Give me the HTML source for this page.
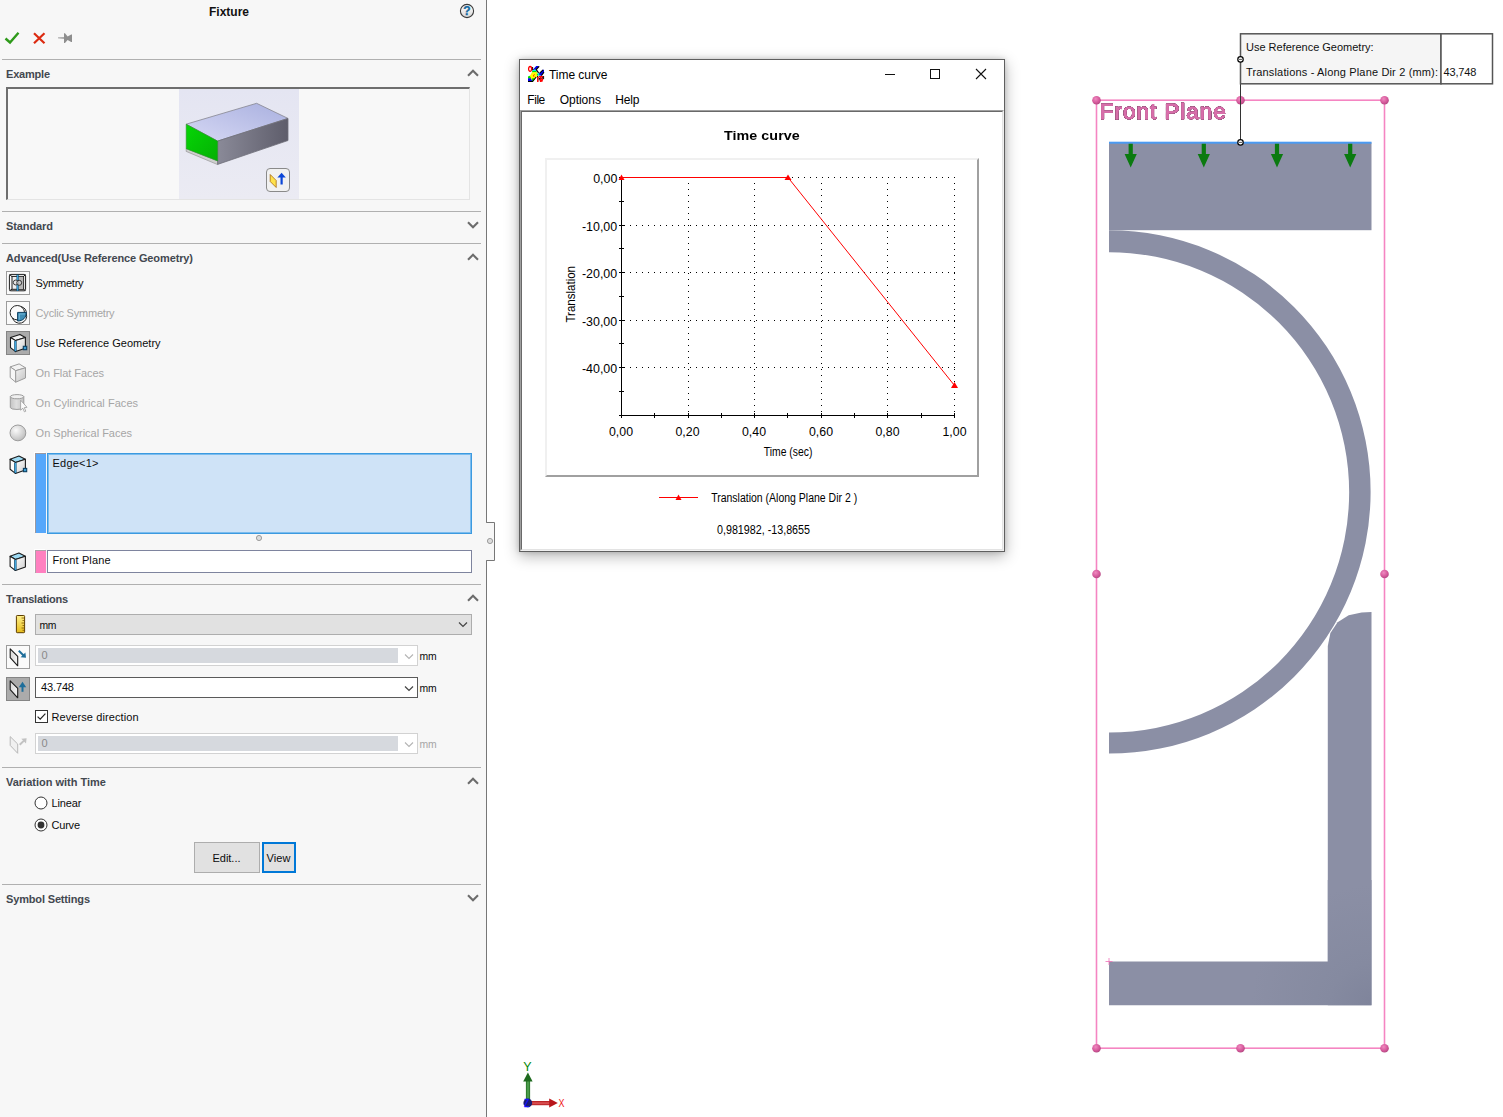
<!DOCTYPE html>
<html><head><meta charset="utf-8"><title>Fixture</title>
<style>
html,body{margin:0;padding:0;}
body{width:1503px;height:1117px;overflow:hidden;background:#fff;position:relative;font-family:"Liberation Sans",sans-serif;font-size:11px;color:#0c0c0c;}
div{box-sizing:border-box;}
#panel{position:absolute;left:0;top:0;width:486px;height:1117px;background:#f7f7f7;}
#pborder{position:absolute;left:486px;top:0;width:1px;height:1117px;background:#777;}
.t{position:absolute;white-space:nowrap;line-height:14px;height:14px;}
.hd{font-weight:bold;color:#434850;}
.dis{color:#a6a6a6;}
.hr{position:absolute;left:2px;width:479px;height:1px;background:#b0b0b0;}
.ibox{position:absolute;left:6px;width:24px;height:24px;border:1px solid #9c9c9c;background:#fafafa;}
.ibox.on{background:#ababab;border-color:#858585;}
.b{position:absolute;}
svg{position:absolute;overflow:visible;}
.chev{fill:none;stroke:#6c6c6c;stroke-width:2.1;}
.inp{position:absolute;left:35px;width:383px;border:1px solid #d2d2d2;background:#fff;}
.inp i{position:absolute;left:2px;top:2px;width:360px;bottom:2px;background:#d6d9de;display:block;}
</style></head><body>
<div id="panel">
<div class="t" style="letter-spacing:-0.003px;left:209px;top:5px;font-weight:bold;font-size:12px;color:#111;">Fixture</div>
<!-- help icon -->
<svg style="left:459px;top:3px" width="16" height="16" viewBox="0 0 16 16"><defs><linearGradient id="hg" x1="0" y1="0" x2="0" y2="1"><stop offset="0" stop-color="#ffffff"/><stop offset="1" stop-color="#d8d8d8"/></linearGradient></defs><circle cx="8" cy="8" r="6.6" fill="url(#hg)" stroke="#3a3a3a" stroke-width="1.1"/><text x="8" y="12.3" text-anchor="middle" font-family="Liberation Sans, sans-serif" font-weight="bold" font-size="12" fill="#1368a0" stroke="#1368a0" stroke-width="0.3">?</text></svg>
<!-- ok / cancel / pin -->
<svg style="left:4px;top:30px" width="16" height="16" viewBox="0 0 16 16"><path d="M1.5 8.5 L6 12.5 L14.5 2.8" fill="none" stroke="#2e9a1a" stroke-width="2.4"/></svg>
<svg style="left:31px;top:30px" width="16" height="16" viewBox="0 0 16 16"><path d="M3 3.2 L13.5 13.3 M13.5 3.2 L3 13.3" fill="none" stroke="#dc2a10" stroke-width="2.2"/></svg>
<svg style="left:57px;top:30px" width="18" height="16" viewBox="57 30 18 16"><polygon points="58,37.4 64.3,37.3 64.3,38.7 58,38.2" fill="#8e8e8e"/><polygon points="64,33.2 65,33.2 67.6,36.4 71.2,34.4 72,34.4 72,42 71.2,42 67.6,39.9 65,42.9 64,42.9" fill="#8e8e8e"/></svg>
<div class="hr" style="top:59px"></div>

<div class="t hd" style="letter-spacing:-0.208px;left:6px;top:67px;">Example</div>
<svg style="left:467px;top:69px" width="12" height="8" viewBox="0 0 12 8"><path class="chev" d="M1 6.8 L6 1.8 L11 6.8"/></svg>
<!-- example box -->
<div class="b" style="left:6px;top:87px;width:464px;height:113px;border-top:2px solid #6e6e6e;border-left:2px solid #6e6e6e;border-right:1px solid #e4e4e4;border-bottom:1px solid #e4e4e4;background:#f8f8f8;"></div>
<div class="b" style="left:179px;top:89px;width:120px;height:110px;background:linear-gradient(180deg,#e4e5f2,#ebebf3);"></div>
<svg style="left:179px;top:89px" width="120" height="110" viewBox="179 89 120 110">
<defs>
<linearGradient id="tp" x1="0" y1="1" x2="1" y2="0"><stop offset="0" stop-color="#d6d8f4"/><stop offset="1" stop-color="#a9b0df"/></linearGradient>
<linearGradient id="sd" x1="0" y1="0" x2="1" y2="0"><stop offset="0" stop-color="#8a8a98"/><stop offset="1" stop-color="#5e5d6b"/></linearGradient>
<linearGradient id="gr" x1="0" y1="0" x2="1" y2="1"><stop offset="0" stop-color="#06d606"/><stop offset="1" stop-color="#04b004"/></linearGradient>
</defs>
<polygon points="186.2,148.5 217.6,160.9 217.6,164.6 186.2,151.4" fill="#cfcfcf" stroke="#8a8a8a" stroke-width="0.6"/>
<polygon points="186.2,124.2 256.6,103.3 288,118.4 217.6,141.1" fill="url(#tp)" stroke="#85858f" stroke-width="0.8"/>
<polygon points="217.6,141.1 288,118.4 288,140.5 217.6,164.4" fill="url(#sd)" stroke="#70707a" stroke-width="0.8"/>
<polygon points="186.2,124.2 217.6,141.1 217.6,160.9 186.2,148.7" fill="url(#gr)" stroke="#2f8f2f" stroke-width="0.6"/>
<rect x="266.5" y="168.5" width="23" height="23" rx="3.5" fill="#f1f1f1" stroke="#8a8a8a" stroke-width="1"/>
<polygon points="270.2,174.5 276.2,180.5 276.2,187.5 270.2,181.5" fill="#ffe24a" stroke="#a86a10" stroke-width="0.8"/>
<path d="M281.6 184.5 V176" stroke="#0b46d8" stroke-width="2.2" fill="none"/>
<polygon points="277.4,177.6 281.6,172.8 285.8,177.6" fill="#0b46d8"/>
</svg>
<div class="hr" style="top:211px"></div>
<div class="t hd" style="letter-spacing:-0.098px;left:6px;top:219px;">Standard</div>
<svg style="left:467px;top:221px" width="12" height="8" viewBox="0 0 12 8"><path class="chev" d="M1 1.2 L6 6.2 L11 1.2"/></svg>
<div class="hr" style="top:243px"></div>
<div class="t hd" style="letter-spacing:-0.121px;left:6px;top:251px;">Advanced(Use Reference Geometry)</div>
<svg style="left:467px;top:253px" width="12" height="8" viewBox="0 0 12 8"><path class="chev" d="M1 6.8 L6 1.8 L11 6.8"/></svg>

<div class="ibox" style="top:271px"></div>
<div class="t" style="letter-spacing:-0.214px;left:35.6px;top:276px;">Symmetry</div>
<div class="ibox" style="top:301px"></div>
<div class="t dis" style="letter-spacing:-0.206px;left:35.6px;top:306px;">Cyclic Symmetry</div>
<div class="ibox on" style="top:331px"></div>
<div class="t" style="letter-spacing:0.013px;left:35.6px;top:336px;">Use Reference Geometry</div>
<div class="t dis" style="letter-spacing:-0.048px;left:35.6px;top:366px;">On Flat Faces</div>
<div class="t dis" style="letter-spacing:0.053px;left:35.6px;top:396px;">On Cylindrical Faces</div>
<div class="t dis" style="letter-spacing:-0.006px;left:35.6px;top:426px;">On Spherical Faces</div>


<!-- selection boxes -->
<div class="b" style="left:35px;top:453px;width:11px;height:80px;background:#55a7fb;border-top:1px solid #9a98a0;border-left:1px solid #9a98a0;box-shadow:-1px -1px 0 #fff;"></div>
<div class="b" style="left:47px;top:453px;width:425px;height:81px;background:#cfe3f7;border:1px solid #3c9ae0;box-shadow:inset 0 0 0 1px #7bbcee;"></div>
<div class="t" style="letter-spacing:0.224px;left:52.5px;top:456px;">Edge&lt;1&gt;</div>
<svg style="left:255px;top:534px" width="8" height="8" viewBox="0 0 8 8"><circle cx="4" cy="4" r="2.6" fill="#dcdcdc" stroke="#8a8a8a" stroke-width="0.8"/></svg>
<div class="b" style="left:35px;top:550px;width:11px;height:23px;background:#ff80c0;border-top:1px solid #b0a0a8;border-left:1px solid #b0a0a8;box-shadow:-1px -1px 0 #fff;"></div>
<div class="b" style="left:47px;top:550px;width:425px;height:23px;background:#fff;border:1px solid #7e849e;"></div>
<div class="t" style="letter-spacing:0.113px;left:52.5px;top:553px;">Front Plane</div>
<div class="hr" style="top:584px"></div>

<div class="t hd" style="letter-spacing:-0.254px;left:6px;top:592px;">Translations</div>
<svg style="left:467px;top:594px" width="12" height="8" viewBox="0 0 12 8"><path class="chev" d="M1 6.8 L6 1.8 L11 6.8"/></svg>
<div class="b" style="left:35px;top:614px;width:437px;height:21px;background:#e1e1e1;border:1px solid #adadad;"></div>
<div class="t" style="letter-spacing:-0.312px;left:39.4px;top:618.5px;font-size:10.4px;">mm</div>
<svg style="left:458px;top:621px" width="10" height="7" viewBox="0 0 10 7"><path d="M1 1.5 L5 5.5 L9 1.5" fill="none" stroke="#444" stroke-width="1.2"/></svg>

<div class="ibox" style="top:645px"></div>
<div class="inp" style="top:645px;height:21px;"><i></i></div>
<div class="t" style="left:41.5px;top:648px;color:#8a8a8a;">0</div>
<svg style="left:404px;top:653px" width="10" height="7" viewBox="0 0 10 7"><path d="M1 1.5 L5 5.5 L9 1.5" fill="none" stroke="#b4b4b4" stroke-width="1.1"/></svg>
<div class="t" style="letter-spacing:-0.312px;left:419.6px;top:650.2px;font-size:10.4px;">mm</div>

<div class="ibox on" style="top:677px"></div>
<div class="b" style="left:35px;top:677px;width:383px;height:21px;background:#fff;border:1px solid #5a5a5a;"></div>
<div class="t" style="letter-spacing:-0.131px;left:41px;top:679.5px;">43.748</div>
<svg style="left:404px;top:685px" width="10" height="7" viewBox="0 0 10 7"><path d="M1 1.5 L5 5.5 L9 1.5" fill="none" stroke="#444" stroke-width="1.2"/></svg>
<div class="t" style="letter-spacing:-0.312px;left:419.6px;top:682.2px;font-size:10.4px;">mm</div>

<div class="b" style="left:35px;top:710px;width:13px;height:13px;background:#fff;border:1px solid #333;"></div>
<svg style="left:35px;top:710px" width="13" height="13" viewBox="0 0 13 13"><path d="M2.6 6.6 L5.2 9.2 L10.4 3.6" fill="none" stroke="#222" stroke-width="1.2"/></svg>
<div class="t" style="letter-spacing:0.088px;left:51.5px;top:709.5px;">Reverse direction</div>

<div class="inp" style="top:733px;height:21px;"><i></i></div>
<div class="t" style="left:41.5px;top:736px;color:#8a8a8a;">0</div>
<svg style="left:404px;top:741px" width="10" height="7" viewBox="0 0 10 7"><path d="M1 1.5 L5 5.5 L9 1.5" fill="none" stroke="#b4b4b4" stroke-width="1.1"/></svg>
<div class="t dis" style="letter-spacing:-0.312px;left:419.6px;top:738.2px;font-size:10.4px;">mm</div>
<div class="hr" style="top:767px"></div>

<div class="t hd" style="letter-spacing:-0.003px;left:6px;top:775px;">Variation with Time</div>
<svg style="left:467px;top:777.3px" width="12" height="8" viewBox="0 0 12 8"><path class="chev" d="M1 6.8 L6 1.8 L11 6.8"/></svg>
<svg style="left:34.3px;top:795.8px" width="14" height="14" viewBox="0 0 14 14"><circle cx="7" cy="7" r="6" fill="#fff" stroke="#333" stroke-width="1"/></svg>
<div class="t" style="letter-spacing:-0.116px;left:51.5px;top:796px;">Linear</div>
<svg style="left:34.3px;top:817.7px" width="14" height="14" viewBox="0 0 14 14"><circle cx="7" cy="7" r="6" fill="#fff" stroke="#333" stroke-width="1"/><circle cx="7" cy="7" r="3.4" fill="#333"/></svg>
<div class="t" style="letter-spacing:-0.211px;left:51.5px;top:818px;">Curve</div>
<div class="b" style="left:194px;top:842px;width:66px;height:31px;background:#e1e1e1;border:1px solid #adadad;"></div>
<div class="t" style="letter-spacing:-0.021px;left:212.5px;top:851px;">Edit...</div>
<div class="b" style="left:262px;top:842px;width:34px;height:31px;background:#e1e1e1;border:2px solid #0078d7;"></div>
<div class="t" style="letter-spacing:0.115px;left:266.5px;top:851px;">View</div>
<div class="hr" style="top:884px"></div>
<div class="t hd" style="letter-spacing:-0.156px;left:6px;top:892px;">Symbol Settings</div>
<svg style="left:467px;top:894px" width="12" height="8" viewBox="0 0 12 8"><path class="chev" d="M1 1.2 L6 6.2 L11 1.2"/></svg>
<!-- ICONS-LIST -->
<svg style="left:0;top:0" width="40" height="770" viewBox="0 0 40 770">
<defs>
<linearGradient id="cw" x1="0" y1="0" x2="1" y2="1"><stop offset="0" stop-color="#ffffff"/><stop offset="1" stop-color="#cfcfcf"/></linearGradient>
<linearGradient id="cg" x1="0" y1="0" x2="1" y2="1"><stop offset="0" stop-color="#f2f2f2"/><stop offset="1" stop-color="#c2c2c2"/></linearGradient>
<linearGradient id="pl" x1="0" y1="0" x2="1" y2="0"><stop offset="0" stop-color="#d8d8d8"/><stop offset="1" stop-color="#f6f6f6"/></linearGradient>
<radialGradient id="sp" cx="0.38" cy="0.34" r="0.7"><stop offset="0" stop-color="#fafafa"/><stop offset="0.6" stop-color="#d6d6d6"/><stop offset="1" stop-color="#bcbcbc"/></radialGradient>
<linearGradient id="cy" x1="0" y1="0" x2="1" y2="0"><stop offset="0" stop-color="#c4c4c4"/><stop offset="0.45" stop-color="#dedede"/><stop offset="1" stop-color="#c2c2c2"/></linearGradient>
<linearGradient id="ru" x1="0" y1="0" x2="0" y2="1"><stop offset="0" stop-color="#fff08a"/><stop offset="1" stop-color="#e6bc1c"/></linearGradient>
</defs>
<!-- symmetry -->
<g stroke="#1c1c1c" stroke-width="1" fill="none">
<rect x="9.4" y="274.4" width="16.2" height="16.4" rx="1.4"/><path d="M9.6 274.6 L12 276.6 M25.4 274.6 L23.6 276.4 M9.6 290.6 L12 289.2 M25.4 290.6 L23.6 289.2"/>
<rect x="12" y="276.4" width="11.6" height="12.9" fill="#f0f0f0"/><rect x="18.2" y="276.9" width="4.9" height="11.9" fill="#b6b6b6" stroke="none"/>
</g>
<path d="M17.6 274.6 V291" stroke="#0d4f78" stroke-width="2.2"/><path d="M17.6 275 V290.6" stroke="#3fa9e0" stroke-width="1"/>
<circle cx="15.8" cy="282.5" r="2.5" fill="#e6e6e6" stroke="#2a2a2a" stroke-width="0.9"/><circle cx="19.2" cy="282.8" r="2.5" fill="#d2d2d2" fill-opacity="0.7" stroke="#2a2a2a" stroke-width="0.9"/>
<!-- cyclic -->
<circle cx="17.3" cy="312.7" r="7.2" fill="#fbfbfb" stroke="#222" stroke-width="1"/>
<path d="M12.5 318 A7.2 7.2 0 0 0 26.4 314 A7.2 7.2 0 0 0 21 306.6" fill="none" stroke="#222" stroke-width="1"/>
<path d="M17.6 312.4 H26.3 C26.3 317.6 23 321 17.6 321 Z" fill="#3f8db5" stroke="#0c3f60" stroke-width="1"/><path d="M19.3 314 H25 M19.3 314 V319.5" stroke="#7fc0de" stroke-width="0.8" fill="none"/>
<!-- use ref geom (pressed) -->
<g stroke="#1c1c1c" stroke-width="1.1" stroke-linejoin="round">
<polygon points="10.5,337.5 19.9,334.4 25.4,337.4 15.6,340.6" fill="#f4f4f4"/>
<polygon points="10.5,337.5 15.6,340.6 15.6,351.6 10.5,347.6" fill="#fdfdfd"/>
<polygon points="15.6,340.6 25.4,337.4 25.4,348.2 15.6,351.6" fill="url(#cw)"/>
</g>
<path d="M15.4 340.8 V351.4" stroke="#0d4f78" stroke-width="2.3"/><path d="M15.4 341.2 V351" stroke="#49b2ea" stroke-width="1"/>
<rect x="23.3" y="346.3" width="3.4" height="3.4" fill="#3fa0d6" stroke="#0c3f60" stroke-width="1.1"/>
<!-- on flat faces (disabled) -->
<g stroke="#9c9c9c" stroke-width="1" stroke-linejoin="round">
<polygon points="10.2,366.9 19.1,363.9 25.5,367.8 15.7,370.7" fill="#f3f3f3"/>
<polygon points="10.2,366.9 15.7,370.7 15.7,382.2 10.2,377.6" fill="#f6f6f6"/>
<polygon points="15.7,370.7 25.5,367.8 25.5,378 15.7,382.2" fill="url(#cg)"/>
</g>
<!-- cylinder -->
<path d="M10.3 396.7 V407.6 A6.8 2.1 0 0 0 23.8 407.6 V396.7 Z" fill="url(#cy)" stroke="#9c9c9c" stroke-width="1"/>
<ellipse cx="17.05" cy="396.7" rx="6.75" ry="2.1" fill="#f0f0f0" stroke="#9c9c9c" stroke-width="1"/>
<path d="M20.6 400.2 V410.2 L22.8 408.2 L24.4 411.8 L25.8 411.2 L24.3 407.6 L27 407.3 Z" fill="#fbfbfb" stroke="#a4a4a4" stroke-width="0.9" stroke-linejoin="round"/>
<!-- sphere -->
<circle cx="17.9" cy="432.9" r="7.9" fill="url(#sp)" stroke="#9c9c9c" stroke-width="1"/>
<!-- selection icons -->
<g stroke="#1c1c1c" stroke-width="1.1" stroke-linejoin="round">
<polygon points="10.1,459.2 18.9,456 25.4,459.2 15.4,462.4" fill="#9ddaf3"/>
<polygon points="10.1,459.2 15.4,462.4 15.4,473.4 10.1,469.3" fill="#fdfdfd"/>
<polygon points="15.4,462.4 25.4,459.2 25.4,469.9 15.4,473.4" fill="url(#cw)"/>
<path d="M15.4 462.6 V473.2" stroke="#0d4f78" stroke-width="2.3"/><path d="M15.4 463 V472.8" stroke="#49b2ea" stroke-width="1"/>
</g>
<rect x="23.4" y="468.4" width="3.3" height="3.3" fill="#3fa0d6" stroke="#0c3f60" stroke-width="1.1"/>
<g stroke="#1c1c1c" stroke-width="1.1" stroke-linejoin="round">
<polygon points="10.1,556.3 18.9,553.1 25.4,556.3 15.4,559.5" fill="#9ddaf3"/>
<polygon points="10.1,556.3 15.4,559.5 15.4,570.5 10.1,566.4" fill="#fdfdfd"/>
<polygon points="15.4,559.5 25.4,556.3 25.4,567.0 15.4,570.5" fill="url(#cw)"/>
<path d="M15.4 559.7 V570.3" stroke="#0d4f78" stroke-width="2.3"/><path d="M15.4 560.1 V569.9" stroke="#49b2ea" stroke-width="1"/>
</g>
<!-- ruler -->
<rect x="16.4" y="615.5" width="8.2" height="17.2" rx="0.8" fill="url(#ru)" stroke="#5e3e00" stroke-width="1"/>
<path d="M21.5 618 H24.5 M22.5 620.5 H24.5 M21.5 623 H24.5 M22.5 625.5 H24.5 M21.5 628 H24.5 M22.5 630.3 H24.5" stroke="#7a5200" stroke-width="0.8"/>
<!-- dir1 -->
<polygon points="10.2,648.8 17.7,656.3 17.7,665.8 10.2,657.7" fill="url(#pl)" stroke="#1c1c1c" stroke-width="1.1" stroke-linejoin="round"/>
<path d="M18.8 650.8 L23.6 655.5" stroke="#1f6e9a" stroke-width="2"/><polygon points="26,657.8 20.6,657.2 25.4,652.4" fill="#1f6e9a"/>
<!-- dir2 pressed -->
<polygon points="10.2,680.8 17.7,688.3 17.7,697.8 10.2,689.6" fill="url(#pl)" stroke="#1c1c1c" stroke-width="1.1" stroke-linejoin="round"/>
<path d="M22.5 691.8 V685.5" stroke="#1f6e9a" stroke-width="2"/><polygon points="18.8,687.2 22.5,681.8 26.2,687.2" fill="#1f6e9a"/>
<!-- normal disabled -->
<polygon points="10.2,736.6 17.7,744 17.7,753.3 10.2,745.4" fill="#f0f0f0" stroke="#b8b8b8" stroke-width="1" stroke-linejoin="round"/>
<path d="M19.7 744.8 L24 740.6" stroke="#c2c2c2" stroke-width="2"/><polygon points="26.6,738.2 26,743.6 21.3,738.8" fill="#c2c2c2"/>
</svg>
</div>
<div id="pborder"></div>
<!-- tab handle -->
<svg style="left:486px;top:521px" width="10" height="41" viewBox="0 0 10 41"><path d="M0.5 1.5 H8.5 V39.5 H0.5" fill="#f7f7f7" stroke="#777" stroke-width="1"/><rect x="0" y="2" width="1" height="37" fill="#f7f7f7"/><circle cx="4" cy="20" r="2.6" fill="#dcdcdc" stroke="#8a8a8a" stroke-width="0.8"/></svg>
<!-- DIALOG -->
<div class="b" style="left:519px;top:59px;width:486px;height:493px;background:#fff;border:1px solid #5f5f5f;box-shadow:0 4px 14px rgba(0,0,0,.30),0 0 5px rgba(0,0,0,.16);"></div>
<!-- title icon -->
<svg style="left:528px;top:66px" width="16" height="16" viewBox="0 0 16 16">
<polygon points="5,3.6 8.2,0 10.6,0 10.6,0.8 8,3.6 6.5,4" fill="#0000f0"/>
<polygon points="4.3,4.6 5.2,3.4 7.6,3.4 8.6,5 7.8,5.4 4.6,5.4" fill="#00f0f0"/>
<polygon points="3.9,6 4.4,5 8.2,5 9.2,6.4 4,6.6" fill="#00e000"/>
<polygon points="4,6.2 9.2,6.2 10,9.6 8,11.2 5.4,14.6 4,14.4 2.6,12.2 0.4,11.6 2.4,9" fill="#ffff00"/>
<polygon points="0,10.6 1.6,9.8 2.8,11.4 2.8,12.6 0,12.6" fill="#00e000"/>
<polygon points="4,12.4 5.4,12 6.6,13 5,15.2 4,15" fill="#00e000"/>
<polygon points="0,12.2 2.8,12.2 4.2,14.8 4,15.2 0,15.2" fill="#0000f0"/>
<polygon points="8.8,8 10.2,7.4 10.4,9.4 9,9.6" fill="#00e000"/>
<polygon points="9.6,7 12,7 12.4,8.6 11,9.8 10,9.6" fill="#00f0f0"/>
<polygon points="11.4,7.2 14.6,3.8 16,3.8 16,6 13.4,9.8 11.2,9.6" fill="#0000f0"/>
<path d="M11.2 0.4 L8.2 3.6 L10.6 6.9" stroke="#000" stroke-width="1.2" fill="none"/>
<path d="M4.6 1 V4.2 L5.4 3.4" stroke="#000" stroke-width="1" fill="none"/>
<path d="M15.2 3.9 L11.6 7.1 M16 6.2 L13.4 9.6" stroke="#000" stroke-width="1.1" fill="none"/>
<path d="M0 15.5 H4.6 L8.2 11" stroke="#000" stroke-width="1.2" fill="none"/>
<ellipse cx="2.1" cy="2.9" rx="1.5" ry="2.4" fill="#fff" stroke="#f00" stroke-width="1.3"/>
<path d="M6.4 8.4 L5.6 9.6 L5.8 10.6" stroke="#f00" stroke-width="1" fill="none"/>
<path d="M9.8 10.4 V16 M12.6 11.4 V16 M11 10.8 H15.4 M14.6 12 L13.8 15.6" stroke="#f00" stroke-width="1.5" fill="none"/>
<path d="M9 10.2 L10.6 11.2 M11.2 12 V14.4 M11 12.6 H12.2 M13.4 12.4 L14.6 11.6 L15.8 12 M15.6 10 V13.2" stroke="#000" stroke-width="0.9" fill="none"/>
</svg>
<div class="t" style="letter-spacing:-0.045px;left:549px;top:67.5px;font-size:12px;color:#000;">Time curve</div>
<svg style="left:880px;top:64px" width="110" height="20" viewBox="880 64 110 20"><path d="M885 74.5 H895" stroke="#111" stroke-width="1"/><rect x="930.5" y="69.5" width="9" height="9" fill="none" stroke="#111" stroke-width="1"/><path d="M976 69 L986 79 M986 69 L976 79" stroke="#111" stroke-width="1.1"/></svg>
<div class="t" style="letter-spacing:-0.448px;left:527.3px;top:93px;font-size:12px;color:#000;">File</div>
<div class="t" style="letter-spacing:-0.027px;left:559.7px;top:93px;font-size:12px;color:#000;">Options</div>
<div class="t" style="letter-spacing:-0.163px;left:615.2px;top:93px;font-size:12px;color:#000;">Help</div>
<!-- client area sunken -->
<div class="b" style="left:520px;top:110px;width:484px;height:441px;background:#fff;border-top:1px solid #a0a0a0;border-left:1px solid #a0a0a0;border-right:1px solid #f0f0f0;border-bottom:1px solid #f0f0f0;"></div>
<div class="b" style="left:521px;top:111px;width:482px;height:439px;background:#fff;border-top:1px solid #696969;border-left:1px solid #696969;border-right:1px solid #e3e3e3;border-bottom:1px solid #e3e3e3;"></div>
<div class="t" style="left:724.4px;top:128.3px;font-size:13.4px;transform:scaleX(1.068);transform-origin:0 0;letter-spacing:0.05px;font-weight:bold;color:#000;line-height:16px;height:16px;">Time curve</div>
<!-- chart box -->
<div class="b" style="left:545px;top:158px;width:434px;height:319px;background:#fff;border-top:2px solid #f0f0f0;border-left:2px solid #f0f0f0;border-right:2px solid #a0a0a0;border-bottom:2px solid #a0a0a0;"></div>
<svg style="left:545px;top:158px" width="434" height="319" viewBox="545 158 434 319" font-family="Liberation Sans, sans-serif" font-size="12" fill="#000">
<g stroke="#000" stroke-width="1" stroke-dasharray="1 5" fill="none" shape-rendering="crispEdges">
<path d="M624 177.5 H955 M624 225.5 H955 M624 272.5 H955 M624 320.5 H955 M624 367.5 H955"/>
<path d="M688.5 183 V414 M754.5 183 V414 M821.5 183 V414 M887.5 183 V414 M954.5 183 V414"/>
</g>
<g stroke="#000" stroke-width="1" fill="none" shape-rendering="crispEdges">
<path d="M621.5 177 V415.5 M619 415.5 H955"/>
<path d="M619 177.5 H624 M619 201.5 H624 M619 225.5 H624 M619 248.5 H624 M619 272.5 H624 M619 296.5 H624 M619 320.5 H624 M619 343.5 H624 M619 367.5 H624 M619 391.5 H624"/>
<path d="M621.5 413 V418 M654.5 413 V418 M688.5 413 V418 M721.5 413 V418 M754.5 413 V418 M787.5 413 V418 M821.5 413 V418 M854.5 413 V418 M887.5 413 V418 M921.5 413 V418 M954.5 413 V418"/>
</g>
<g text-anchor="end" font-size="13" lengthAdjust="spacingAndGlyphs">
<text x="617.4" y="183" textLength="24.2" lengthAdjust="spacingAndGlyphs">0,00</text><text x="617.2" y="230.5" textLength="35.3" lengthAdjust="spacingAndGlyphs">-10,00</text><text x="617.2" y="278" textLength="35.3" lengthAdjust="spacingAndGlyphs">-20,00</text><text x="617.2" y="325.5" textLength="35.3" lengthAdjust="spacingAndGlyphs">-30,00</text><text x="617.2" y="373" textLength="35.3" lengthAdjust="spacingAndGlyphs">-40,00</text>
</g>
<g text-anchor="middle" font-size="13">
<text x="621" y="436" textLength="24" lengthAdjust="spacingAndGlyphs">0,00</text><text x="687.5" y="436" textLength="24" lengthAdjust="spacingAndGlyphs">0,20</text><text x="754" y="436" textLength="24" lengthAdjust="spacingAndGlyphs">0,40</text><text x="821" y="436" textLength="24" lengthAdjust="spacingAndGlyphs">0,60</text><text x="887.5" y="436" textLength="24" lengthAdjust="spacingAndGlyphs">0,80</text><text x="954.5" y="436" textLength="24" lengthAdjust="spacingAndGlyphs">1,00</text>
</g>
<text style="font-size:12px" x="763.8" y="455.7" textLength="48.6" lengthAdjust="spacingAndGlyphs">Time (sec)</text>
<text style="font-size:12px" transform="translate(575,322.5) rotate(-90)" textLength="56.5" lengthAdjust="spacingAndGlyphs">Translation</text>
<path d="M621.5 177.5 H788 L954.5 385.5" stroke="#f00" stroke-width="1" fill="none"/>
<polygon points="621.5,174.5 624.5,180 618.5,180" fill="#f00"/><polygon points="788,174.5 791.5,180 784.5,180" fill="#f00"/><polygon points="954.5,382 958,388 951,388" fill="#f00"/>
</svg>
<!-- legend -->
<svg style="left:650px;top:485px" width="230" height="60" viewBox="650 485 230 60" font-family="Liberation Sans, sans-serif" font-size="11" fill="#000">
<path d="M659 497.5 H698" stroke="#f00" stroke-width="1"/><polygon points="678.5,494.5 681.5,500 675.5,500" fill="#f00"/>
<text style="font-size:12px" x="711.2" y="502" textLength="146" lengthAdjust="spacingAndGlyphs">Translation (Along Plane Dir 2 )</text>
<text style="font-size:12px" x="717" y="533.6" textLength="93" lengthAdjust="spacingAndGlyphs">0,981982, -13,8655</text>
</svg>
<!-- VIEW -->
<svg style="left:1080px;top:20px" width="423" height="1097" viewBox="1080 20 423 1097">
<defs>
<radialGradient id="hb" cx="0.4" cy="0.35" r="0.7"><stop offset="0" stop-color="#f08ac0"/><stop offset="0.6" stop-color="#d65a9c"/><stop offset="1" stop-color="#b04880"/></radialGradient>
<radialGradient id="lg2" gradientUnits="userSpaceOnUse" cx="1371.5" cy="1005.2" r="120"><stop offset="0" stop-color="#7f849b"/><stop offset="0.35" stop-color="#858aa0"/><stop offset="1" stop-color="#8b8fa5"/></radialGradient>
</defs>
<!-- solid geometry -->
<g fill="#8b8fa5">
<rect x="1109" y="142.5" width="262.5" height="87.7"/>
<path d="M1109 230.2 A261.7 261.7 0 0 1 1109 753.6 L1109 732.5 A240.15 240.15 0 0 0 1109 252.2 Z"/>
<path d="M1327.8 1005.2 V646 L1330.4 633 L1337.6 622.3 L1348.7 615.3 L1361.6 612.4 L1371.5 612.1 V1005.2 Z"/>
<path d="M1109 961.5 H1327.8 V880 H1371.5 V1005.2 H1109 Z" fill="url(#lg2)"/>
</g>
<rect x="1109" y="141.7" width="262.5" height="2" fill="#4a9af2"/>
<!-- arrows -->
<g fill="#0b7a10">
<path d="M1128.6 143.8 H1132.8 V154 H1136.8 L1130.7 167.4 L1124.6 154 H1128.6 Z"/>
<path d="M1201.7 143.8 L1205.9 143.8 L1205.9 154.0 L1209.9 154.0 L1203.8 167.4 L1197.7 154.0 L1201.7 154.0 Z"/><path d="M1274.9 143.8 L1279.1 143.8 L1279.1 154.0 L1283.1 154.0 L1277.0 167.4 L1270.9 154.0 L1274.9 154.0 Z"/><path d="M1348.1 143.8 L1352.3 143.8 L1352.3 154.0 L1356.3 154.0 L1350.2 167.4 L1344.1 154.0 L1348.1 154.0 Z"/>
</g>
<!-- plane -->
<rect x="1096.5" y="100.2" width="288" height="948" fill="none" stroke="#f585c2" stroke-width="1.6"/>
<path d="M1105.5 961.5 H1112.5 M1109 958 V965" stroke="#f070b8" stroke-width="0.8"/>
<g fill="url(#hb)">
<circle cx="1096.5" cy="100.2" r="4.3"/><circle cx="1240.5" cy="100.2" r="4.3"/><circle cx="1384.5" cy="100.2" r="4.3"/>
<circle cx="1096.5" cy="574" r="4.3"/><circle cx="1384.5" cy="574" r="4.3"/>
<circle cx="1096.5" cy="1048.2" r="4.3"/><circle cx="1240.5" cy="1048.2" r="4.3"/><circle cx="1384.5" cy="1048.2" r="4.3"/>
</g>
<filter id="ol" x="-5%" y="-20%" width="110%" height="140%"><feGaussianBlur in="SourceAlpha" stdDeviation="0.7" result="b"/><feComponentTransfer in="b" result="d"><feFuncA type="linear" slope="7" intercept="-0.35"/></feComponentTransfer><feFlood flood-color="#7a4e6c"/><feComposite in2="d" operator="in" result="o"/><feMerge><feMergeNode in="o"/><feMergeNode in="SourceGraphic"/></feMerge></filter>
<text filter="url(#ol)" style="font-family:'Liberation Sans',sans-serif;font-size:22.2px;fill:#d86eaa;stroke:#d86eaa;stroke-width:0.8px;letter-spacing:1px" x="1099.8" y="119.2" textLength="127" lengthAdjust="spacingAndGlyphs">Front Plane</text>
<!-- callout -->
<path d="M1240.5 84 V142" stroke="#333" stroke-width="1"/>
<rect x="1240.5" y="33.8" width="200.5" height="50" fill="#f5f5f5" stroke="#555" stroke-width="1.5"/>
<rect x="1441" y="33.8" width="51.5" height="50" fill="#fff" stroke="#555" stroke-width="1.5"/>
<circle cx="1240.5" cy="59.4" r="2.7" fill="#fff" stroke="#000" stroke-width="1.2"/><path d="M1239 59.4 H1242" stroke="#111" stroke-width="0.7"/>
<circle cx="1240.5" cy="142.4" r="2.7" fill="#fff" stroke="#000" stroke-width="1.2"/><path d="M1239 142.4 H1242" stroke="#111" stroke-width="0.7"/>
<g font-family="Liberation Sans, sans-serif" fill="#111">
<text style="letter-spacing:-0.008px;font-size:11px" x="1246" y="51">Use Reference Geometry:</text>
<text style="letter-spacing:0.161px;font-size:11px" x="1246" y="75.7">Translations - Along Plane Dir 2 (mm):</text>
<text style="letter-spacing:-0.191px;font-size:11px" x="1443.6" y="75.7">43,748</text>
</g>
</svg>
<!-- triad -->
<svg style="left:515px;top:1055px" width="60" height="60" viewBox="515 1055 60 60">
<defs><linearGradient id="gy" x1="0" y1="0" x2="1" y2="0"><stop offset="0" stop-color="#1f6e1f"/><stop offset="0.5" stop-color="#58a858"/><stop offset="1" stop-color="#1f6e1f"/></linearGradient>
<linearGradient id="rx" x1="0" y1="0" x2="0" y2="1"><stop offset="0" stop-color="#b01418"/><stop offset="0.5" stop-color="#e05a5c"/><stop offset="1" stop-color="#b01418"/></linearGradient></defs>
<rect x="525.9" y="1081" width="4.2" height="19" fill="url(#gy)"/>
<polygon points="527.9,1072.4 532.6,1081.6 523.2,1081.6" fill="#1e6a1e"/>
<rect x="531" y="1101" width="19" height="4.2" fill="url(#rx)"/>
<polygon points="557.8,1103 549.2,1098.4 549.2,1107.6" fill="#b8161a"/>
<circle cx="527.8" cy="1102.9" r="4.4" fill="#1c1c72"/>
<g font-family="Liberation Sans, sans-serif" font-size="11">
<text x="523.3" y="1070.7" fill="#0a8a0a" style="font-size:12.5px">Y</text>
<text x="558.6" y="1106.8" fill="#f01010" style="font-size:11.5px;letter-spacing:-1px" transform="translate(558.6 0) scale(0.78 1) translate(-558.6 0)">X</text>
<text x="523.9" y="1106.8" fill="#1414ff" stroke="#1414ff" stroke-width="0.4" style="font-size:11.5px" transform="translate(523.9 0) scale(0.75 1) translate(-523.9 0)">Z</text>
</g>
</svg>
</body></html>
